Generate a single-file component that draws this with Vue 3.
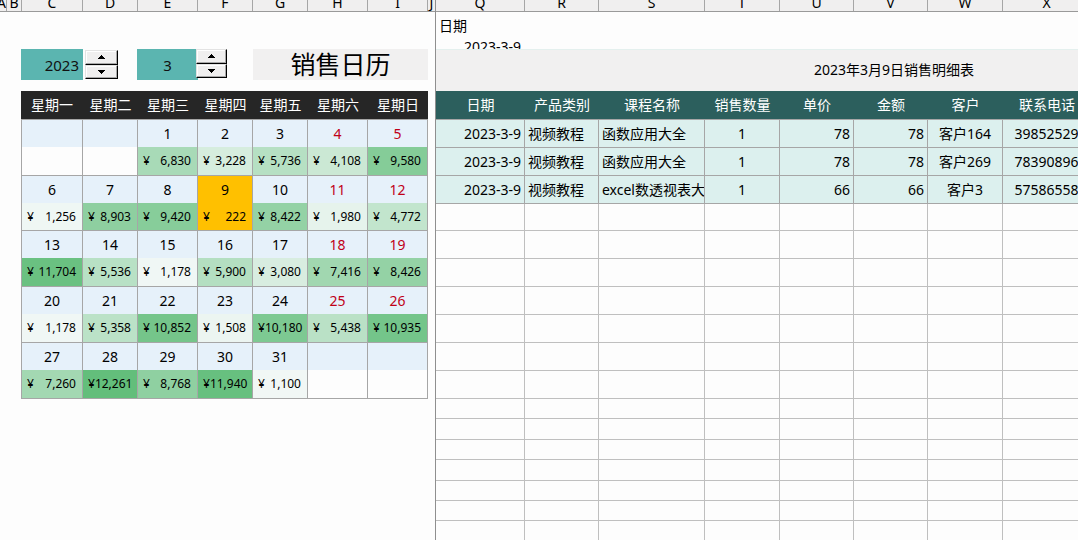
<script setup>
import { ref } from 'vue'

const year = ref(2023)
const month = ref(3)

const leftLetters = ['A', 'B', 'C', 'D', 'E', 'F', 'G', 'H', 'I', 'J']
const rightLetters = ['Q', 'R', 'S', 'T', 'U', 'V', 'W', 'X', '']

const weekdays = ['星期一', '星期二', '星期三', '星期四', '星期五', '星期六', '星期日']
const sales = [
  6830, 3228, 5736, 4108, 9580, 1256, 8903, 9420, 222, 8422, 1980, 4772,
  11704, 5536, 1178, 5900, 3080, 7416, 8426, 1178, 5358, 10852, 1508, 10180,
  5438, 10935, 7260, 12261, 8768, 11940, 1100,
]
const selectedDay = 9
const firstOffset = 2
const weeks = Array.from({ length: 5 }, (_, w) =>
  Array.from({ length: 7 }, (_, d) => {
    const day = w * 7 + d + 1 - firstOffset
    return day >= 1 && day <= sales.length ? { day, amount: sales[day - 1] } : null
  })
)

const low = [252, 252, 255]
const high = [99, 190, 123]
const min = Math.min(...sales)
const max = Math.max(...sales)

// Two-colour scale from near white to green
function shade(cell) {
  if (!cell || cell.day === selectedDay) return {}
  const t = (cell.amount - min) / (max - min)
  const rgb = low.map((c, i) => Math.round(c + (high[i] - c) * t))
  return { backgroundColor: `rgb(${rgb.join(',')})` }
}

const headers = ['日期', '产品类别', '课程名称', '销售数量', '单价', '金额', '客户', '联系电话', '']
const rows = [
  ['2023-3-9', '视频教程', '函数应用大全', '1', '78', '78', '客户164', '39852529', ''],
  ['2023-3-9', '视频教程', '函数应用大全', '1', '78', '78', '客户269', '78390896', ''],
  ['2023-3-9', '视频教程', 'excel数透视表大全', '1', '66', '66', '客户3', '57586558', ''],
]
const emptyRows = [27, 28, 28, 28, 28, 28, 28, 20, 21, 20, 21, 20, 20, 21]
</script>

<template>
  <main class="sheet">
    <section class="pane frozen">
      <div class="letters left-cols">
        <span v-for="l in leftLetters" :key="l">{{ l }}</span>
      </div>
      <div class="controls">
        <input v-model="year" class="value year" aria-label="年" />
        <div class="spinner">
          <button type="button" aria-label="年 +" @click="year++"><svg viewBox="0 0 7 4"><path d="M3 0h1v1h1v1h1v1h1v1H0V3h1V2h1V1h1z" /></svg></button>
          <button type="button" aria-label="年 -" @click="year--"><svg viewBox="0 0 7 4"><path d="M0 0h7v1H6v1H5v1H4v1H3V3H2V2H1V1H0z" /></svg></button>
        </div>
        <input v-model="month" class="value month" aria-label="月" />
        <div class="spinner over">
          <button type="button" aria-label="月 +" @click="month++"><svg viewBox="0 0 7 4"><path d="M3 0h1v1h1v1h1v1h1v1H0V3h1V2h1V1h1z" /></svg></button>
          <button type="button" aria-label="月 -" @click="month--"><svg viewBox="0 0 7 4"><path d="M0 0h7v1H6v1H5v1H4v1H3V3H2V2H1V1H0z" /></svg></button>
        </div>
        <h1>销售日历</h1>
      </div>
      <table class="calendar">
        <colgroup>
          <col class="w62" /><col class="w55" /><col class="w60" /><col class="w55" /><col class="w55" /><col class="w60" /><col class="w60" />
        </colgroup>
        <thead>
          <tr><th v-for="d in weekdays" :key="d">{{ d }}</th></tr>
        </thead>
        <tbody v-for="(week, w) in weeks" :key="w">
          <tr class="days">
            <td v-for="(c, i) in week" :key="i" :class="{ weekend: i > 4, selected: c && c.day === selectedDay }">{{ c ? c.day : '' }}</td>
          </tr>
          <tr class="amounts">
            <td v-for="(c, i) in week" :key="i" :class="{ selected: c && c.day === selectedDay }" :style="shade(c)">
              <div v-if="c" class="money"><span>¥</span><span>{{ c.amount.toLocaleString('en-US') }}</span></div>
            </td>
          </tr>
        </tbody>
      </table>
    </section>

    <section class="pane scroll">
      <div class="letters right-cols">
        <span v-for="(l, i) in rightLetters" :key="i">{{ l }}</span>
      </div>
      <div class="criteria">
        <div class="label">日期</div>
        <div class="date">2023-3-9</div>
      </div>
      <table class="detail">
        <caption>2023年3月9日销售明细表</caption>
        <colgroup>
          <col class="w89" /><col class="w74" /><col class="w106" /><col class="w75" /><col class="w74" /><col class="w74" /><col class="w75" /><col class="w88" /><col />
        </colgroup>
        <thead>
          <tr><th v-for="(h, i) in headers" :key="i">{{ h }}</th></tr>
        </thead>
        <tbody>
          <tr v-for="(r, n) in rows" :key="n" class="filled">
            <td v-for="(v, i) in r" :key="i">{{ v }}</td>
          </tr>
          <tr v-for="(h, n) in emptyRows" :key="'e' + n" :style="{ height: h + 'px' }">
            <td v-for="i in headers.length" :key="i"></td>
          </tr>
        </tbody>
      </table>
    </section>
  </main>
</template>

<style>
body {
  background: #fdfdfd;
}
</style>

<style scoped>
* {
  box-sizing: border-box;
}
.sheet {
  display: flex;
  height: 100vh;
  overflow: hidden;
  background: #fdfdfd;
  color: #000;
  font: 14px/20px "Noto Sans", "Noto Sans CJK SC", sans-serif;
}
.pane {
  overflow: hidden;
}
.frozen {
  flex: none;
  border-right: 1px solid #8f8f8f;
}
.scroll {
  flex: 1;
  min-width: 0;
}
.letters {
  display: grid;
  height: 12px;
  overflow: hidden;
  background: #f0efef;
  border-bottom: 1px solid #9a9a9a;
}
.letters span {
  height: 11px;
  border-right: 1px solid #a6a6a6;
  text-align: center;
  line-height: 5px;
}
.left-cols {
  grid-template-columns: 7px 15px 61px 55px 60px 55px 55px 60px 60px 7px;
}
.left-cols span:first-child {
  display: flex;
  justify-content: flex-end;
}
.left-cols span:last-child {
  border-right: 0;
}
.right-cols {
  width: 916px;
  grid-template-columns: 89px 74px 106px 75px 74px 74px 75px 88px 1fr;
}
.controls {
  display: grid;
  grid-template-columns: 62px 54px 61px 55px 175px;
  height: 31px;
  margin: 37px 0 11px 21px;
}
.value {
  width: 100%;
  height: 31px;
  min-width: 0;
  border: 0;
  border-radius: 0;
  padding: 0 4px;
  background: #5bb5b0;
  color: #111;
  font: inherit;
  font-size: 15px;
}
.year {
  text-align: right;
}
.month {
  text-align: center;
}
.spinner {
  position: relative;
  display: flex;
  flex-direction: column;
  width: 33px;
  height: 29px;
  margin: 1px 0 0 2px;
}
.spinner.over {
  width: 31px;
  margin: 0 0 0 -2px;
}
.spinner button {
  display: flex;
  flex: 1;
  align-items: center;
  justify-content: center;
  padding: 0;
  border: 1px solid;
  border-color: #e3e3e3 #000 #000 #e3e3e3;
  border-radius: 0;
  background: #f0efef;
  box-shadow: inset -1px -1px 0 #a8a8a8, inset 1px 1px 0 #fff;
}
.spinner svg {
  width: 7px;
  height: 4px;
}
h1 {
  margin: 0;
  background: #f1f0f0;
  text-align: center;
  font-weight: 400;
  font-size: 25px;
  line-height: 31px;
}
table {
  table-layout: fixed;
  border-collapse: separate;
  border-spacing: 0;
}
th {
  padding: 0;
  font-weight: 400;
  color: #fff;
  white-space: nowrap;
}
td {
  padding: 0;
  overflow: hidden;
  white-space: nowrap;
}
.calendar {
  width: 407px;
  margin: 0 7px 0 21px;
}
.w55 { width: 55px; }
.w60 { width: 60px; }
.w62 { width: 62px; }
.w74 { width: 74px; }
.w75 { width: 75px; }
.w88 { width: 88px; }
.w89 { width: 89px; }
.w106 { width: 106px; }
th {
  height: 29px;
  border-bottom: 1px solid #a6a6a6;
}
.calendar th {
  background: #262626;
}
.calendar td {
  border-right: 1px solid #a6a6a6;
}
.calendar td:first-child {
  border-left: 1px solid #a6a6a6;
}
.days td {
  height: 27px;
  background: #e6f1fa;
  text-align: center;
}
.days .weekend {
  color: #c00018;
}
.amounts td {
  height: 29px;
  border-bottom: 1px solid #a6a6a6;
  font-size: 12px;
}
.calendar tbody:nth-of-type(2) .amounts td {
  height: 28px;
}
.calendar td.selected {
  background: #ffc000;
}
.money {
  display: flex;
  justify-content: space-between;
  padding: 0 6px 0 5px;
  line-height: 20px;
}
.criteria {
  height: 37px;
}
.label {
  height: 29px;
  padding-left: 3px;
  line-height: 28px;
}
.date {
  width: 88px;
  height: 8px;
  overflow: hidden;
  padding-right: 3px;
  text-align: right;
  line-height: 12px;
}
.detail {
  width: 916px;
}
caption {
  height: 42px;
  background: #f1f0f0;
  border-top: 1px solid #e4f0ee;
  line-height: 40px;
}
.detail th {
  background: #2c5f5d;
}
.detail td {
  border-right: 1px solid #bfbfbf;
  border-bottom: 1px solid #bfbfbf;
}
.detail .filled {
  height: 28px;
}
.detail .filled td {
  padding: 0 3px;
  background: #dcf0ee;
  border-color: #a6a6a6;
  text-align: center;
}
.detail .filled td:nth-child(1),
.detail .filled td:nth-child(5),
.detail .filled td:nth-child(6) {
  text-align: right;
}
.detail .filled td:nth-child(2),
.detail .filled td:nth-child(3) {
  text-align: left;
}
</style>
